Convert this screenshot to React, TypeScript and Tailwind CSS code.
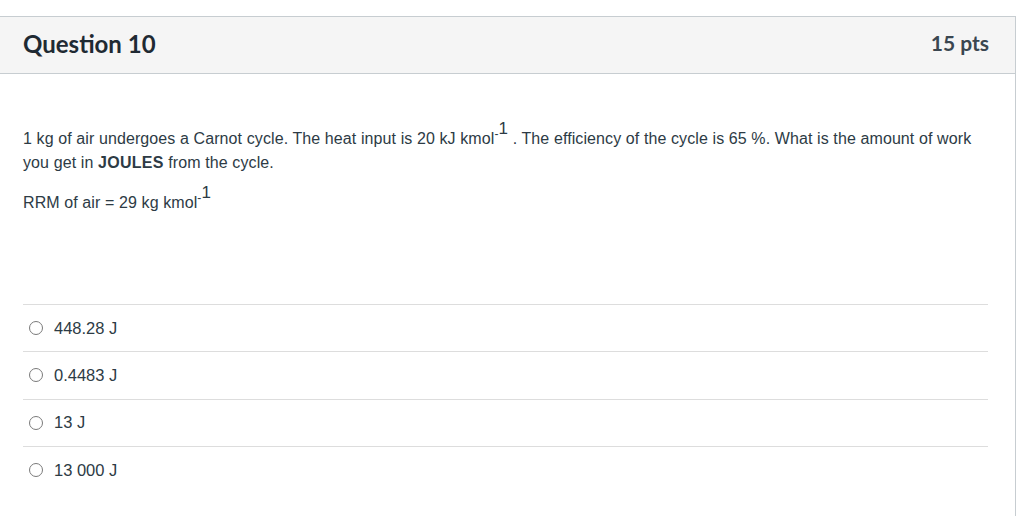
export default function App() {
    const answers = ["448.28 J", "0.4483 J", "13 J", "13 000 J"];

    return (
        <div className="min-h-screen w-full bg-white pt-[16px]">
            {/* ** Question Card ** */}
            <div className="w-[1016px] border-r border-t border-[#c7cdd1] bg-white pb-[60px]">
                {/* ** Header ** */}
                <div className="flex h-[57px] items-center justify-between border-b border-[#c7cdd1] bg-[#f5f5f5] pl-[23px] pr-[26px] font-['Lato',sans-serif] font-bold">
                    <h2 className="mb-[2px] text-[24px] leading-none text-[#1f2a33]">Question 10</h2>
                    <div className="mb-[6px] text-[21px] leading-none text-[#3a4650]">15 pts</div>
                </div>

                {/* ** Question Text ** */}
                <div className="px-[23px] pt-[53px] font-['Liberation_Sans',Arial,sans-serif] text-[16px] leading-[24px] tracking-[0.1px] text-[#2d3b45]">
                    <p className="m-0">
                        1 kg of air undergoes a Carnot cycle. The heat input is 20 kJ kmol
                        <sup className="text-[12px]">
                            -<span className="relative top-[-4px] text-[17px]">1</span>
                        </sup>
                        {" "}. The efficiency of the cycle is 65 %. What is the amount of work you get in{" "}
                        <strong className="font-bold tracking-[0.3px]">JOULES</strong> from the cycle.
                    </p>
                    <p className="mt-[16px]">
                        RRM of air = 29 kg kmol
                        <sup className="text-[12px]">
                            -<span className="relative top-[-4px] text-[17px]">1</span>
                        </sup>
                    </p>
                </div>

                {/* ** Answers ** */}
                <div className="ml-[23px] mr-[27px] mt-[89px] font-['Liberation_Sans',Arial,sans-serif] text-[16.5px] text-[#2d3b45]">
                    {answers.map((answer) => (
                        <label
                            key={answer}
                            className="flex h-[47.33px] items-center gap-[11px] border-t border-[#dddddd] pl-[6px]"
                        >
                            <span className="h-[14px] w-[14px] shrink-0 rounded-full border border-[#7a7a7a] bg-white" />
                            <span>{answer}</span>
                        </label>
                    ))}
                </div>
            </div>
        </div>
    );
}
